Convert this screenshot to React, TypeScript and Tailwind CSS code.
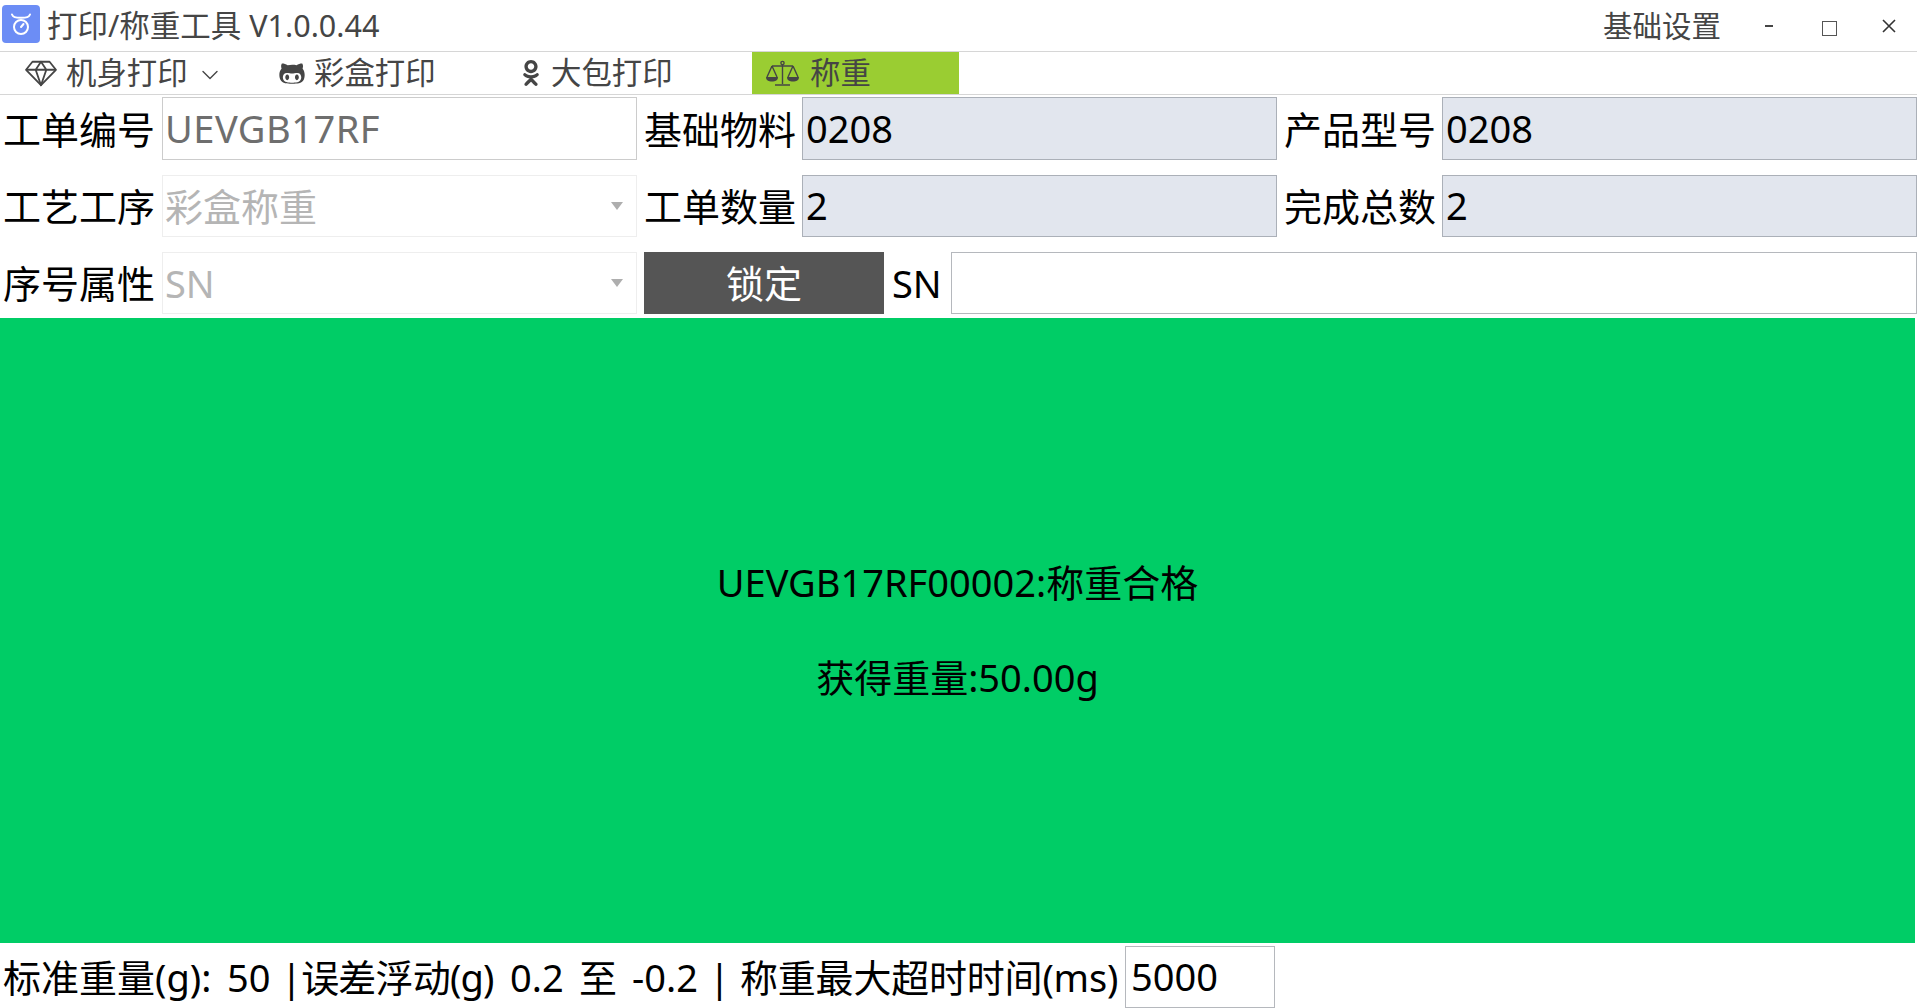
import { FaGithubAlt, FaOdnoklassniki } from "react-icons/fa";
import { ChevronDown } from "lucide-react";

const FONT = "font-['Noto_Sans','Noto_Sans_CJK_SC',sans-serif]";

const Label = ({ text, className = "" }: { text: string; className?: string }) => (
  <span className={`text-[38px] leading-none text-black whitespace-nowrap ${className}`}>
    {text}
  </span>
);

const ReadOnlyInput = ({ value, className = "" }: { value: string; className?: string }) => (
  <div
    className={`h-full flex items-center pl-[3px] pb-[2px] border border-[#abb0b8] bg-[#e2e6ee] text-[38px] leading-none text-black ${className}`}
  >
    {value}
  </div>
);

const DisabledSelect = ({ value }: { value: string }) => (
  <div className="w-[475px] h-full flex items-center justify-between pl-[2px] pr-[13px] border border-[#eeeeee] text-[38px] leading-none text-[#b5b5b5]">
    <span>{value}</span>
    <span className="w-0 h-0 border-x-[6px] border-x-transparent border-t-[8px] border-t-[#aeaeae]" />
  </div>
);

const Tab = ({ icon, label, className = "", children }: { icon: React.ReactNode; label: string; className?: string; children?: React.ReactNode }) => (
  <div className={`flex items-center text-[30.4px] leading-none text-[#454545] ${className}`}>
    {icon}
    <span>{label}</span>
    {children}
  </div>
);

const App = () => {
  return (
    <div className={`w-[1917px] h-[1008px] overflow-hidden bg-white flex flex-col ${FONT}`}>
      <div className="h-[52px] flex items-center justify-between border-b border-[#d6d6d6] pl-[2px]">
        <div className="flex items-center">
          <div className="mb-[4px] w-[38px] h-[38px] rounded-[4px] bg-[#6c8df5]">
            <svg viewBox="0 0 38 38" className="w-[38px] h-[38px]" fill="none" stroke="white" strokeWidth="2" strokeLinecap="round">
              <path d="M10 9.500c1 2.600 3 3.200 9 3.200s8-.6 9-3.200" />
              <circle cx="19" cy="22" r="7" />
              <path d="M19 22l2.500-3" />
            </svg>
          </div>
          <span className="ml-[7px] text-[30.5px] leading-none text-[#454545]">打印/称重工具 V1.0.0.44</span>
        </div>
        <div className="flex items-center text-[#454545]">
          <span className="text-[29.5px] leading-none">基础设置</span>
          <span className="ml-[44px] w-[8px] h-[2px] bg-[#454545]" />
          <span className="ml-[49px] mt-[5px] w-[15px] h-[15px] border border-[#555555]" />
          <svg viewBox="0 0 14 14" className="ml-[45px] mr-[21px] w-[14px] h-[14px]" stroke="#333333" strokeWidth="1.6">
            <path d="M1 1l12 12M13 1L1 13" />
          </svg>
        </div>
      </div>

      <div className="h-[43px] flex items-stretch border-b border-[#d6d6d6]">
        <Tab
          className="pl-[25px] w-[278px]"
          icon={
            <svg viewBox="0 0 30 25" className="w-[32px] h-[27px] mr-[9px]" fill="none" stroke="#454545" strokeWidth="1.7" strokeLinejoin="round">
              <path d="M7 1.500h16l6 7.500-14 14.500L1 9z" />
              <path d="M1 9h28M10 9l5-7.500 5 7.500M10 9l5 14.500L20 9" />
            </svg>
          }
          label="机身打印"
        >
          <ChevronDown className="ml-[8px] mt-[3px] w-[28px] h-[28px]" strokeWidth={1.2} />
        </Tab>
        <Tab
          className="w-[237px]"
          icon={<FaGithubAlt className="w-[28px] h-[27px] mr-[8px]" />}
          label="彩盒打印"
        />
        <Tab
          className="pl-[7px] w-[237px]"
          icon={<FaOdnoklassniki className="w-[18px] h-[26px] mr-[11px]" />}
          label="大包打印"
        />
        <Tab
          className="w-[207px] pl-[14px] bg-[#9acd32]"
          icon={
            <svg viewBox="0 0 33 27" className="w-[33px] h-[27px] mr-[11px]" fill="none" stroke="#454545" strokeWidth="1.4">
              <path d="M6 6h21M16.500 4v20M9 25h15M6 6L1 17M6 6l5 11M27 6l-5 11M27 6l5 11" />
              <circle cx="16.500" cy="3" r="1.600" />
              <path d="M0 17h12c0 3.400-2.700 4.600-6 4.600S0 20.400 0 17zM21 17h12c0 3.400-2.700 4.600-6 4.600s-6-1.200-6-4.600z" fill="#454545" stroke="none" />
            </svg>
          }
          label="称重"
        />
      </div>

      <div className="mt-[2px] h-[63px] flex items-center">
        <Label text="工单编号" className="ml-[3px] w-[159px]" />
        <div className="w-[475px] h-full flex items-center pl-[2px] pb-[2px] border border-[#cccccc] text-[38px] leading-none tracking-[0.5px] text-[#6e6e6e]">
          UEVGB17RF
        </div>
        <Label text="基础物料" className="ml-[7px] w-[158px]" />
        <ReadOnlyInput value="0208" className="w-[475px]" />
        <Label text="产品型号" className="ml-[7px] w-[158px]" />
        <ReadOnlyInput value="0208" className="flex-1" />
      </div>

      <div className="mt-[15px] h-[62px] flex items-center">
        <Label text="工艺工序" className="ml-[3px] w-[159px]" />
        <DisabledSelect value="彩盒称重" />
        <Label text="工单数量" className="ml-[7px] w-[158px]" />
        <ReadOnlyInput value="2" className="w-[475px]" />
        <Label text="完成总数" className="ml-[7px] w-[158px]" />
        <ReadOnlyInput value="2" className="flex-1" />
      </div>

      <div className="mt-[15px] h-[62px] flex items-center">
        <Label text="序号属性" className="ml-[3px] w-[159px]" />
        <DisabledSelect value="SN" />
        <div className="ml-[7px] w-[240px] h-full bg-[#555555] flex items-center justify-center text-[38px] leading-none text-white">
          锁定
        </div>
        <Label text="SN" className="ml-[8px] w-[59px]" />
        <div className="flex-1 h-full border border-[#b5b8bd] bg-white" />
      </div>

      <div className="mt-[4px] mr-[2px] h-[625px] pb-[2px] bg-[#00cd66] flex flex-col items-center justify-center gap-[50px] text-[38px] leading-[45px] text-black">
        <span>UEVGB17RF00002:称重合格</span>
        <span>获得重量:50.00g</span>
      </div>

      <div className="mt-[3px] h-[62px] flex items-center">
        <Label text="标准重量(g):" className="ml-[3px] w-[224px]" />
        <Label text="50" className="w-[54px]" />
        <Label text="|误差浮动(g)" className="w-[229px] tracking-[-0.8px]" />
        <Label text="0.2" className="w-[69px]" />
        <Label text="至" className="w-[53px]" />
        <Label text="-0.2" className="w-[77px]" />
        <Label text="|" className="w-[31px]" />
        <Label text="称重最大超时时间(ms)" className="w-[385px] tracking-[-0.2px]" />
        <div className="w-[150px] h-full flex items-center pl-[5px] pb-[2px] border border-[#b5b8bd] text-[38px] leading-none text-black">
          5000
        </div>
      </div>
    </div>
  );
};

export default App;
